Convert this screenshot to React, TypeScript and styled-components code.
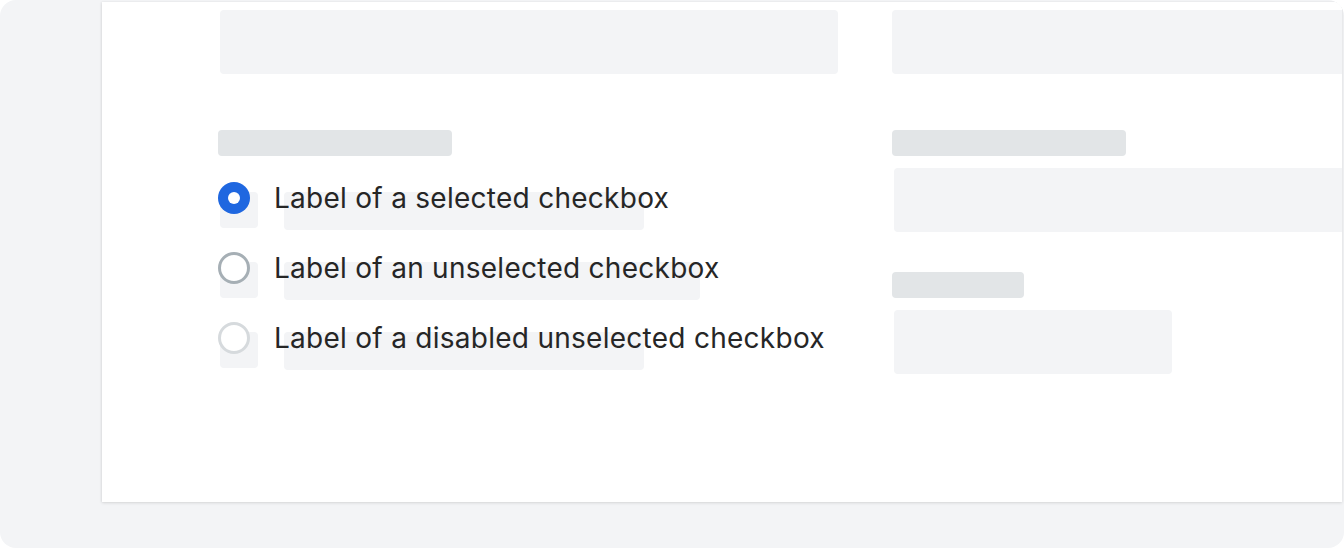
import styled, { createGlobalStyle } from "styled-components";

const GlobalStyle = createGlobalStyle`
  html, body {
    margin: 0;
    padding: 0;
    background: #ffffff;
  }
  body {
    font-family: Inter, "Noto Sans", "Liberation Sans", sans-serif;
  }
`;

const Frame = styled.div`
  width: 1344px;
  height: 548px;
  box-sizing: border-box;
  padding: 2px 2px 0 102px;
  background: #f3f4f6;
  border-radius: 16px;
  overflow: hidden;
`;

const Card = styled.div`
  height: 500px;
  box-sizing: border-box;
  padding: 8px 0 0 116px;
  background: #ffffff;
  box-shadow: 0 1px 3px rgba(0, 0, 0, 0.12), -1px 0 2px rgba(0, 0, 0, 0.04);
  overflow: hidden;
  display: grid;
  grid-template-columns: 620px 520px;
  column-gap: 54px;
  align-content: start;
`;

const Column = styled.div`
  display: flex;
  flex-direction: column;
`;

const Field = styled.div<{ $width?: number; $offset?: number; $top?: number }>`
  width: ${(p) => (p.$width ? `${p.$width}px` : "auto")};
  align-self: ${(p) => (p.$width ? "flex-start" : "stretch")};
  height: 64px;
  margin-left: ${(p) => p.$offset ?? 0}px;
  margin-top: ${(p) => p.$top ?? 0}px;
  background: #f3f4f6;
  border-radius: 4px;
`;

const LabelBar = styled.div<{ $width: number; $top?: number }>`
  width: ${(p) => p.$width}px;
  height: 26px;
  margin-top: ${(p) => p.$top ?? 0}px;
  background: #e2e5e7;
  border-radius: 4px;
`;

const RadioGroup = styled.div`
  display: flex;
  flex-direction: column;
  gap: 22px;
  margin-top: 26px;
`;

const Row = styled.div`
  display: grid;
  height: 48px;
  & > * {
    grid-area: 1 / 1;
  }
`;

const Skeleton = styled.div`
  display: flex;
  align-items: flex-start;
  gap: 26px;
  padding: 10px 0 0 2px;
`;

const SkeletonBox = styled.div`
  width: 38px;
  height: 36px;
  background: #f3f4f6;
  border-radius: 4px;
`;

const SkeletonText = styled.div<{ $width: number }>`
  width: ${(p) => p.$width}px;
  height: 38px;
  background: #f3f4f6;
  border-radius: 4px;
`;

const Option = styled.label`
  display: flex;
  align-items: center;
  gap: 24px;
  height: 32px;
  position: relative;
`;

type RadioState = "selected" | "unselected" | "disabled";

const Radio = styled.span<{ $state: RadioState }>`
  width: 32px;
  height: 32px;
  box-sizing: border-box;
  border-radius: 50%;
  flex: none;
  display: flex;
  align-items: center;
  justify-content: center;
  background: ${(p) => (p.$state === "selected" ? "#1f67e0" : "#ffffff")};
  border: ${(p) =>
    p.$state === "selected"
      ? "none"
      : p.$state === "unselected"
      ? "3px solid #a6afb5"
      : "3px solid #d6dadd"};
  &::after {
    content: "";
    display: ${(p) => (p.$state === "selected" ? "block" : "none")};
    width: 12px;
    height: 12px;
    border-radius: 50%;
    background: #ffffff;
  }
`;

const OptionText = styled.span`
  font-size: 28px;
  line-height: 32px;
  letter-spacing: 0.27px;
  color: #262626;
  white-space: nowrap;
`;

const options: { label: string; state: RadioState; bar: number }[] = [
  { label: "Label of a selected checkbox", state: "selected", bar: 360 },
  { label: "Label of an unselected checkbox", state: "unselected", bar: 416 },
  { label: "Label of a disabled unselected checkbox", state: "disabled", bar: 360 },
];

export default function App() {
  return (
    <>
      <GlobalStyle />
      <Frame>
        <Card>
          <Column>
            <Field $offset={2} $width={618} />
            <LabelBar $width={234} $top={56} />
            <RadioGroup>
              {options.map((o) => (
                <Row key={o.label}>
                  <Skeleton>
                    <SkeletonBox />
                    <SkeletonText $width={o.bar} />
                  </Skeleton>
                  <Option>
                    <Radio $state={o.state} />
                    <OptionText>{o.label}</OptionText>
                  </Option>
                </Row>
              ))}
            </RadioGroup>
          </Column>
          <Column>
            <Field />
            <LabelBar $width={234} $top={56} />
            <Field $offset={2} $top={12} />
            <LabelBar $width={132} $top={40} />
            <Field $offset={2} $top={12} $width={278} />
          </Column>
        </Card>
      </Frame>
    </>
  );
}
